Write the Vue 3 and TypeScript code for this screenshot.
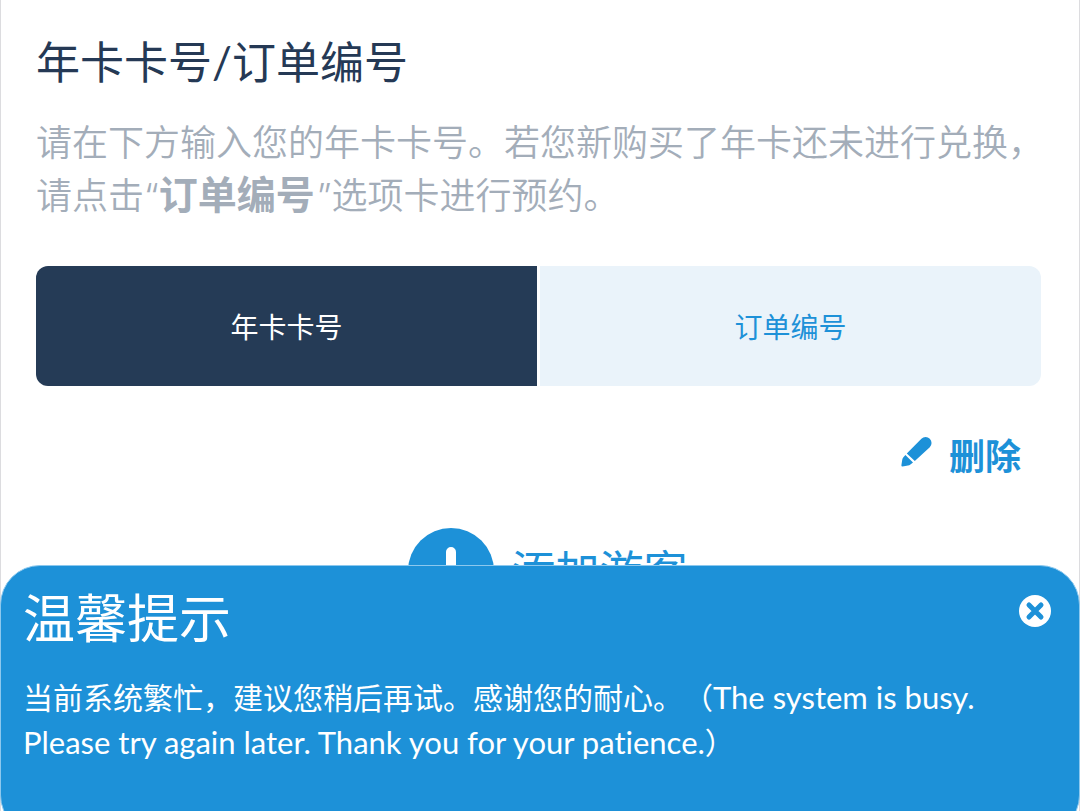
<script setup lang="ts">
import { ref } from 'vue'

type TabId = 'card' | 'order'

interface Tab {
  id: TabId
  label: string
}

const tabs: Tab[] = [
  { id: 'card', label: '年卡卡号' },
  { id: 'order', label: '订单编号' },
]

const activeTab = ref<TabId>('card')
const alertOpen = ref(true)
</script>

<template>
  <main class="page">
    <h1 class="title">年卡卡号/订单编号</h1>
    <p class="intro">
      请在下方输入您的年卡卡号。若您新购买了年卡还未进行兑换，请点击<span class="quote">“</span><strong>订单编号</strong><span class="quote">”</span>选项卡进行预约。
    </p>

    <div class="tabs" role="tablist">
      <button
        v-for="tab in tabs"
        :key="tab.id"
        type="button"
        role="tab"
        class="tab"
        :class="{ active: tab.id === activeTab }"
        :aria-selected="tab.id === activeTab"
        @click="activeTab = tab.id"
      >
        {{ tab.label }}
      </button>
    </div>

    <div class="actions">
      <button type="button" class="link-button delete">
        <svg class="pencil" viewBox="0 0 32 32" aria-hidden="true">
          <path d="M6.8 17.4 21.4 2.8a5.9 5.9 0 0 1 8.4 8.4L14.8 25Z" />
          <path d="M5.4 19 13 26.4 10.4 28.6Q9.4 29.4 8 29.6L2.6 30.6Q1.2 30.6 1.4 29.2L2.2 24Q2.4 22.4 3.4 21.2Z" />
        </svg>
        <span>删除</span>
      </button>
    </div>

    <div class="add-row">
      <button type="button" class="link-button add">
        <svg class="plus" viewBox="0 0 86 86" aria-hidden="true">
          <circle cx="43" cy="43" r="43" />
          <path d="M43 24V62M24 43H62" />
        </svg>
        <span>添加游客</span>
      </button>
    </div>
  </main>

  <section v-if="alertOpen" class="alert" role="alert">
    <header class="alert-head">
      <h2 class="alert-title">温馨提示</h2>
      <button type="button" class="close" aria-label="关闭" @click="alertOpen = false">
        <svg viewBox="0 0 32 32" aria-hidden="true">
          <circle cx="16" cy="16" r="16" />
          <path d="M10 10 22 22M22 10 10 22" />
        </svg>
      </button>
    </header>
    <p class="alert-text">
      当前系统繁忙，建议您稍后再试。感谢您的耐心。（<span class="latin" lang="en">The system is busy. Please try again later. Thank you for your patience.</span>）
    </p>
  </section>
</template>

<style>
body {
  margin: 0;
  background: #fff;
  overflow: hidden;
}
</style>

<style scoped>
.page,
.alert {
  box-sizing: border-box;
  font-family: Lato, 'Noto Sans CJK SC', sans-serif;
  font-variant-ligatures: none;
  text-spacing-trim: space-all;
}

.page {
  min-height: 100vh;
  padding: 32px 36px 0 35px;
  border: solid #dcdcdf;
  border-width: 0 1px;
}

.title {
  margin: 0;
  font-size: 44px;
  line-height: 60px;
  font-weight: 400;
  color: #253955;
}

.intro {
  margin: 24px -1px 0 0;
  font-size: 36px;
  line-height: 53px;
  font-weight: 350;
  color: #a3adb9;
}

.intro strong {
  margin: 0 2px 0 0;
  font-size: 39px;
  line-height: 1;
  font-weight: 700;
}

.quote {
  font-family: Inter, sans-serif;
  line-height: 1;
}

.tabs {
  display: grid;
  grid-template-columns: 1fr 1fr;
  gap: 3px;
  margin: 44px 2px 0 0;
  border-radius: 12px;
  overflow: hidden;
}

.tab {
  height: 120px;
  padding: 0;
  border: 0;
  background: #eaf3fa;
  font: inherit;
  font-size: 28px;
  color: #1d91d8;
}

.tab.active {
  background: #253b56;
  color: #fff;
}

.link-button {
  display: flex;
  align-items: center;
  padding: 0;
  border: 0;
  background: none;
  font: inherit;
  color: #1d91d8;
}

.actions {
  display: flex;
  justify-content: flex-end;
  margin: 44px 22px 0 0;
}

.delete {
  gap: 17px;
  font-size: 36px;
  line-height: 52px;
  font-weight: 700;
}

.pencil {
  width: 32px;
  height: 32px;
  margin-bottom: 8px;
  fill: #1d91d8;
}

.add-row {
  display: flex;
  justify-content: center;
  margin-top: 46px;
  padding-left: 16px;
}

.add {
  gap: 18px;
  font-size: 44px;
  line-height: 64px;
}

.plus {
  width: 86px;
  height: 86px;
  fill: #1d91d8;
}

.plus path {
  stroke: #fff;
  stroke-width: 10;
  stroke-linecap: round;
}

.alert {
  position: fixed;
  right: 0;
  bottom: -24px;
  left: 0;
  padding: 16px 28px 69px 22px;
  border: 1px solid #8cc8ee;
  border-radius: 40px;
  background: #1d91d8;
  color: #fff;
}

.alert-head {
  display: flex;
  justify-content: space-between;
}

.alert-title {
  margin: 0;
  font-size: 52px;
  line-height: 72px;
  font-weight: 400;
}

.close {
  width: 32px;
  height: 32px;
  margin-top: 13px;
  padding: 0;
  border: 0;
  background: none;
}

.close svg {
  display: block;
  width: 32px;
  height: 32px;
  fill: #fff;
}

.close path {
  stroke: #1d91d8;
  stroke-width: 5;
  stroke-linecap: round;
}

.alert-text {
  margin: 21px 0 0;
  font-size: 30px;
  line-height: 45px;
}

.latin {
  font-size: 31px;
}
</style>
